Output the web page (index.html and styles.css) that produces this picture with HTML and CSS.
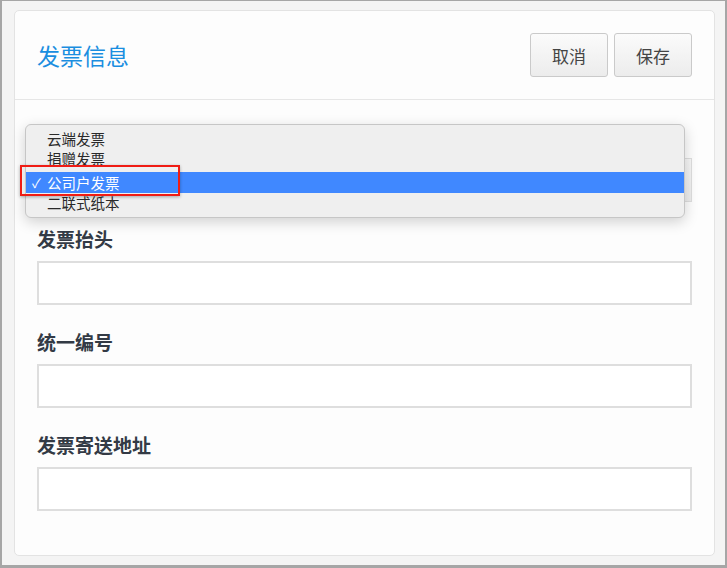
FILE: index.html
```html
<!doctype html>
<html>
<head>
   <title>发票信息</title>
   <meta charset="utf-8">
   <meta name="viewport" content="width=device-width, initial-scale=1.0">
   <link rel="stylesheet" href="styles.css">
</head>
<body>

   <div class="frame">
      <div class="card">

         <div class="card-head">
            <h1>发票信息</h1>
            <div class="actions">
               <button class="btn">取消</button>
               <button class="btn">保存</button>
            </div>
         </div>

         <div class="card-body">

            <div class="field field-first">
               <div class="select"></div>

               <!-- open native menu -->
               <ul class="menu">
                  <li>云端发票</li>
                  <li>捐赠发票</li>
                  <li class="picked"><span class="check">&#10003;</span>公司户发票</li>
                  <li>二联式纸本</li>
               </ul>
               <div class="mark"></div>
            </div>

            <div class="field">
               <label>发票抬头</label>
               <input type="text" class="input">
            </div>

            <div class="field">
               <label>统一编号</label>
               <input type="text" class="input">
            </div>

            <div class="field">
               <label>发票寄送地址</label>
               <input type="text" class="input">
            </div>

         </div>
      </div>
   </div>

</body>
</html>
```

FILE: styles.css
```css
html, body{
   margin: 0;
   padding: 0;
}

body{
   font-family: "Noto Sans CJK SC", "Noto Sans", sans-serif;
   background: #f4f4f4;
}

.frame{
   height: 568px;
   box-sizing: border-box;
   border-style: solid;
   border-color: #a6a6a6;
   border-width: 1px 2px 3px 2px;
   padding: 9px 10px 0 12px;
   background: #f4f4f4;
}

.card{
   background: #fdfdfd;
   border: 1px solid #e3e3e3;
   border-radius: 5px;
}

.card-head{
   display: flex;
   align-items: center;
   justify-content: space-between;
   height: 88px;
   padding: 0 22px;
   border-bottom: 1px solid #e6e6e6;
}

.card-head h1{
   margin: 0;
   font-size: 23px;
   font-weight: normal;
   color: #1a8ee0;
}

.actions{
   display: flex;
   gap: 6px;
}

.btn{
   width: 78px;
   height: 44px;
   font-family: inherit;
   font-size: 17px;
   color: #444;
   background: linear-gradient(#fbfbfb, #ececec);
   border: 1px solid #cacaca;
   border-radius: 3px;
   padding: 0;
}

.card-body{
   padding: 58px 22px 44px 22px;
}

.field{
   position: relative;
   margin-top: 25px;
}

.field-first{
   margin-top: 0;
}

.field label{
   display: block;
   font-size: 19px;
   line-height: 23px;
   font-weight: bold;
   color: #333a45;
   margin-bottom: 11px;
}

.input, .select{
   display: block;
   width: 100%;
   height: 44px;
   box-sizing: border-box;
   border: 2px solid #dedede;
   background: #fff;
   margin: 0;
}

.select{
   border-width: 1px;
   background: linear-gradient(#f6f6f6, #ececec);
}

/* the menu sits over the select */
.menu{
   position: absolute;
   left: -12px;
   top: -34px;
   width: 660px;
   box-sizing: border-box;
   margin: 0;
   padding: 4px 0;
   list-style: none;
   background: #efefef;
   border: 1px solid #c6c6c6;
   border-radius: 6px;
   box-shadow: 0 4px 14px rgba(0, 0, 0, 0.18);
   font-size: 14.5px;
   color: #2a2a2a;
}

.menu li{
   height: 20px;
   line-height: 20px;
   padding-left: 21px;
   position: relative;
}

.menu li.picked{
   margin-top: 3px;
   height: 21px;
   line-height: 21px;
   background: #4088ff;
   color: #fff;
}

.check{
   position: absolute;
   left: 6px;
   font-size: 13px;
}

.mark{
   position: absolute;
   left: -17px;
   top: 7px;
   width: 160px;
   height: 31px;
   box-sizing: border-box;
   border: 2px solid #f01c14;
   box-shadow: 0 1px 3px rgba(0, 0, 0, 0.3);
}
```
